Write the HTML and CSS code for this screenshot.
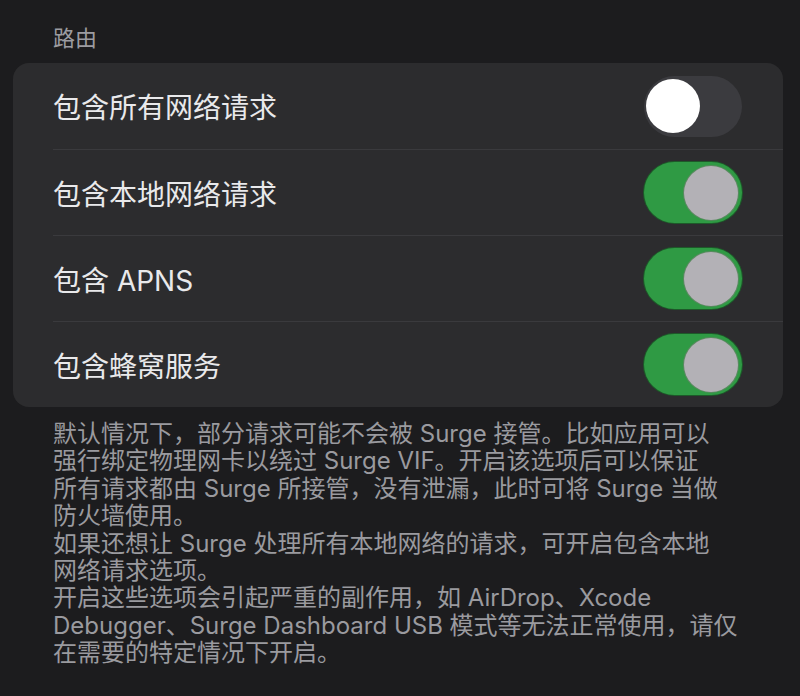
FILE: index.html
```html
<!DOCTYPE html>
<html lang="zh-CN">
<head>
<meta charset="utf-8">
<title>路由</title>
<link rel="stylesheet" href="styles.css">
</head>
<body>
<div class="page">
  <div class="section-title">路由</div>
  <div class="card">
    <div class="row">
      <span class="label">包含所有网络请求</span>
      <span class="toggle off"><span class="knob"></span></span>
    </div>
    <div class="row">
      <span class="label">包含本地网络请求</span>
      <span class="toggle on"><span class="knob"></span></span>
    </div>
    <div class="row">
      <span class="label">包含 APNS</span>
      <span class="toggle on"><span class="knob"></span></span>
    </div>
    <div class="row">
      <span class="label">包含蜂窝服务</span>
      <span class="toggle on"><span class="knob"></span></span>
    </div>
  </div>
  <p class="footer">默认情况下，部分请求可能不会被 Surge 接管。比如应用可以<br>强行绑定物理网卡以绕过 Surge VIF。开启该选项后可以保证<br>所有请求都由 Surge 所接管，没有泄漏，此时可将 Surge 当做<br>防火墙使用。<br>如果还想让 Surge 处理所有本地网络的请求，可开启包含本地<br>网络请求选项。<br>开启这些选项会引起严重的副作用，如 AirDrop、Xcode<br>Debugger、Surge Dashboard USB 模式等无法正常使用，请仅<br>在需要的特定情况下开启。</p>
</div>
</body>
</html>
```
FILE: styles.css
```css
html, body {
  margin: 0;
  padding: 0;
  background: #1c1c1e;
}
body {
  font-family: Inter, "Noto Sans CJK SC", sans-serif;
  width: 800px;
  height: 696px;
  overflow: hidden;
}
.page {
  padding-top: 24px;
}
.section-title {
  padding-left: 53px;
  font-size: 22px;
  line-height: 28px;
  color: #9c9ca1;
  height: 28px;
  margin-bottom: 11px;
}
.card {
  margin: 0 17px 0 13px;
  background: #2c2c2e;
  border-radius: 16px;
  overflow: hidden;
}
.row {
  box-sizing: border-box;
  height: 86px;
  margin-left: 40px;
  padding-right: 41px;
  display: flex;
  align-items: center;
  justify-content: space-between;
}
.row + .row {
  border-top: 1px solid #3a3a3d;
}
.label {
  font-size: 28px;
  color: #e9e9eb;
  white-space: nowrap;
}
.toggle {
  box-sizing: border-box;
  width: 98px;
  height: 61px;
  border-radius: 31px;
  padding: 4px;
  display: flex;
  align-items: center;
}
.toggle .knob {
  width: 54px;
  height: 54px;
  border-radius: 50%;
}
.toggle.off {
  background: #3b3b3f;
  justify-content: flex-start;
  padding-left: 2px;
}
.toggle.off .knob {
  background: #ffffff;
}
.toggle.on {
  background: #2f9a44;
  box-shadow: 0 0 0 1px #1d5a29;
  justify-content: flex-end;
}
.toggle.on .knob {
  background: #b3b1b6;
  box-shadow: 0 0 0 1px #5a8a60;
}
.footer {
  margin: 13px 0 0 0;
  padding-left: 53px;
  font-size: 24px;
  line-height: 27.4px;
  color: #9a9a9f;
  white-space: nowrap;
}
```
